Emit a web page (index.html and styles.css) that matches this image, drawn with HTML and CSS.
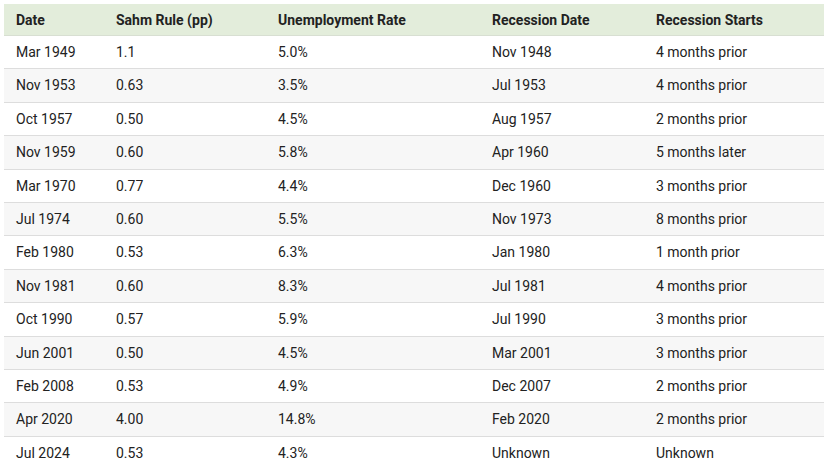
FILE: index.html
```html
<!DOCTYPE html>
<html lang="en">
<head>
<meta charset="utf-8">
<title>Sahm Rule</title>
<link rel="stylesheet" href="styles.css">
</head>
<body>
<div class="wrap">
<table class="data">
<colgroup>
<col class="c1"><col class="c2"><col class="c3"><col class="c4"><col class="c5">
</colgroup>
<thead>
<tr><th>Date</th><th>Sahm Rule (pp)</th><th>Unemployment Rate</th><th>Recession Date</th><th>Recession Starts</th></tr>
</thead>
<tbody>
<tr><td>Mar 1949</td><td>1.1</td><td>5.0%</td><td>Nov 1948</td><td>4 months prior</td></tr>
<tr><td>Nov 1953</td><td>0.63</td><td>3.5%</td><td>Jul 1953</td><td>4 months prior</td></tr>
<tr><td>Oct 1957</td><td>0.50</td><td>4.5%</td><td>Aug 1957</td><td>2 months prior</td></tr>
<tr><td>Nov 1959</td><td>0.60</td><td>5.8%</td><td>Apr 1960</td><td>5 months later</td></tr>
<tr><td>Mar 1970</td><td>0.77</td><td>4.4%</td><td>Dec 1960</td><td>3 months prior</td></tr>
<tr><td>Jul 1974</td><td>0.60</td><td>5.5%</td><td>Nov 1973</td><td>8 months prior</td></tr>
<tr><td>Feb 1980</td><td>0.53</td><td>6.3%</td><td>Jan 1980</td><td>1 month prior</td></tr>
<tr><td>Nov 1981</td><td>0.60</td><td>8.3%</td><td>Jul 1981</td><td>4 months prior</td></tr>
<tr><td>Oct 1990</td><td>0.57</td><td>5.9%</td><td>Jul 1990</td><td>3 months prior</td></tr>
<tr><td>Jun 2001</td><td>0.50</td><td>4.5%</td><td>Mar 2001</td><td>3 months prior</td></tr>
<tr><td>Feb 2008</td><td>0.53</td><td>4.9%</td><td>Dec 2007</td><td>2 months prior</td></tr>
<tr><td>Apr 2020</td><td>4.00</td><td>14.8%</td><td>Feb 2020</td><td>2 months prior</td></tr>
<tr><td>Jul 2024</td><td>0.53</td><td>4.3%</td><td>Unknown</td><td>Unknown</td></tr>
</tbody>
</table>
</div>
</body>
</html>
```

FILE: styles.css
```css
html, body {
  margin: 0;
  padding: 0;
  background: #ffffff;
}
body {
  font-family: Roboto, "Liberation Sans", Arial, sans-serif;
  font-size: 14px;
  color: #222222;
}
.wrap {
  padding: 4px;
}
.data {
  width: 820px;
  table-layout: fixed;
  border-collapse: collapse;
  border-spacing: 0;
}
.c1 { width: 100px; }
.c2 { width: 162px; }
.c3 { width: 214px; }
.c4 { width: 164px; }
.c5 { width: 180px; }
.data th {
  background: #e3eddb;
  text-align: left;
  font-weight: 700;
  padding: 5.5px 12px 5px;
  line-height: 20.5px;
  border-bottom: 1px solid #d8dfd2;
  color: #222222;
}
.data td {
  padding: 6px 12px;
  line-height: 20.4px;
  border-top: 1px solid #dddddd;
  color: #222222;
}
.data tbody tr:first-child td {
  border-top: none;
}
.data tbody tr:nth-child(even) td {
  background: #f7f7f7;
}
```
